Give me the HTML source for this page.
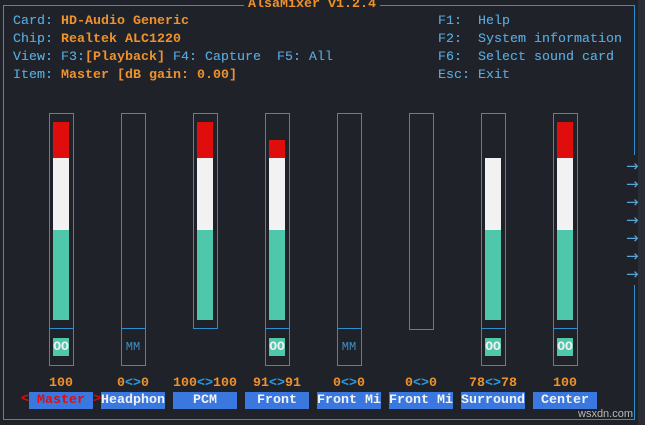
<!DOCTYPE html>
<html><head><style>
body{margin:0;width:645px;height:425px;background:#1f2229;overflow:hidden;position:relative;font-family:"Liberation Mono",monospace;font-size:13.33px;}
.t{position:absolute;white-space:pre;line-height:18px;}
.b{color:#55a6d9;font-weight:500;text-shadow:0 0 0.3px #55a6d9}
.o{color:#f0922b;font-weight:bold}
.box{position:absolute;border:1px solid #2b8fd0;box-sizing:border-box;width:25px;}
.f{position:absolute;width:16px;}
.lab{position:absolute;top:392px;height:17px;width:64px;background:#3a78df;color:#f2f2f2;font-weight:bold;line-height:17px;text-align:center;white-space:pre;}
.val{position:absolute;top:375px;width:72px;text-align:center;line-height:18px;font-weight:bold;color:#f0922b;}
.val span{color:#2b9ce0}
.oo{position:absolute;width:16px;height:18px;background:#4fc7ab;color:#f2f2f2;font-weight:bold;text-align:center;line-height:18px;font-size:13px}
.mm{position:absolute;width:16px;color:#3d8fc9;text-align:center;line-height:18px;font-size:12px}
.ar{position:absolute;left:626px;color:#55a6d9;font-size:15px;line-height:18px;font-family:"DejaVu Sans",sans-serif}
</style></head><body>
<div style="position:absolute;left:3px;top:5px;width:632px;height:415px;border:1px solid #2b8fd0;box-sizing:border-box"></div>
<div style="position:absolute;left:638px;top:0;width:7px;height:425px;background:#2a2d33"></div>
<div class="t o" style="left:244px;top:-4px;background:#1f2229;padding:0 4px">AlsaMixer v1.2.4</div>
<div class="t" style="left:13px;top:13px"><span class="b">Card: </span><span class="o">HD-Audio Generic</span></div>
<div class="t" style="left:13px;top:31px"><span class="b">Chip: </span><span class="o">Realtek ALC1220</span></div>
<div class="t" style="left:13px;top:49px"><span class="b">View: F3:</span><span class="o">[Playback]</span><span class="b"> F4: Capture  F5: All</span></div>
<div class="t" style="left:13px;top:67px"><span class="b">Item: </span><span class="o">Master [dB gain: 0.00]</span></div>
<div class="t b" style="left:438px;top:13px">F1:  Help</div>
<div class="t b" style="left:438px;top:31px">F2:  System information</div>
<div class="t b" style="left:438px;top:49px">F6:  Select sound card</div>
<div class="t b" style="left:438px;top:67px">Esc: Exit</div>

<div class="box" style="left:49px;top:113px;height:216px"></div><div class="box" style="left:49px;top:328px;height:38px"></div>
<div class="f" style="left:53px;top:122px;height:36px;background:#e00d0d"></div><div class="f" style="left:53px;top:158px;height:72px;background:#f2f2f2"></div><div class="f" style="left:53px;top:230px;height:90px;background:#4fc7ab"></div>
<div class="oo" style="left:53px;top:338px">OO</div>

<div class="box" style="left:121px;top:113px;height:216px"></div><div class="box" style="left:121px;top:328px;height:38px"></div>
<div class="mm" style="left:125px;top:338px">MM</div>

<div class="box" style="left:193px;top:113px;height:216px"></div>
<div class="f" style="left:197px;top:122px;height:36px;background:#e00d0d"></div><div class="f" style="left:197px;top:158px;height:72px;background:#f2f2f2"></div><div class="f" style="left:197px;top:230px;height:90px;background:#4fc7ab"></div>

<div class="box" style="left:265px;top:113px;height:216px"></div><div class="box" style="left:265px;top:328px;height:38px"></div>
<div class="f" style="left:269px;top:140px;height:18px;background:#e00d0d"></div><div class="f" style="left:269px;top:158px;height:72px;background:#f2f2f2"></div><div class="f" style="left:269px;top:230px;height:90px;background:#4fc7ab"></div>
<div class="oo" style="left:269px;top:338px">OO</div>

<div class="box" style="left:337px;top:113px;height:216px"></div><div class="box" style="left:337px;top:328px;height:38px"></div>
<div class="mm" style="left:341px;top:338px">MM</div>

<div class="box" style="left:409px;top:113px;height:217px"></div>

<div class="box" style="left:481px;top:113px;height:216px"></div><div class="box" style="left:481px;top:328px;height:38px"></div>
<div class="f" style="left:485px;top:158px;height:72px;background:#f2f2f2"></div><div class="f" style="left:485px;top:230px;height:90px;background:#4fc7ab"></div>
<div class="oo" style="left:485px;top:338px">OO</div>

<div class="box" style="left:553px;top:113px;height:216px"></div><div class="box" style="left:553px;top:328px;height:38px"></div>
<div class="f" style="left:557px;top:122px;height:36px;background:#e00d0d"></div><div class="f" style="left:557px;top:158px;height:72px;background:#f2f2f2"></div><div class="f" style="left:557px;top:230px;height:90px;background:#4fc7ab"></div>
<div class="oo" style="left:557px;top:338px">OO</div>

<div class="val" style="left:25px">100</div>
<div class="val" style="left:97px">0<span>&lt;&gt;</span>0</div>
<div class="val" style="left:169px">100<span>&lt;&gt;</span>100</div>
<div class="val" style="left:241px">91<span>&lt;&gt;</span>91</div>
<div class="val" style="left:313px">0<span>&lt;&gt;</span>0</div>
<div class="val" style="left:385px">0<span>&lt;&gt;</span>0</div>
<div class="val" style="left:457px">78<span>&lt;&gt;</span>78</div>
<div class="val" style="left:529px">100</div>

<div class="t" style="left:21px;top:391px;color:#e00d0d;font-weight:bold">&lt;</div>
<div class="t" style="left:93px;top:391px;color:#e00d0d;font-weight:bold">&gt;</div>
<div class="lab" style="left:29px;color:#e00d0d">Master</div>
<div class="lab" style="left:101px">Headphon</div>
<div class="lab" style="left:173px">PCM</div>
<div class="lab" style="left:245px">Front</div>
<div class="lab" style="left:317px">Front Mi</div>
<div class="lab" style="left:389px">Front Mi</div>
<div class="lab" style="left:461px">Surround</div>
<div class="lab" style="left:533px">Center</div>

<div style="position:absolute;left:625px;top:155px;width:11px;height:130px;background:#1f2229"></div>
<div class="ar" style="top:157px">→</div>
<div class="ar" style="top:175px">→</div>
<div class="ar" style="top:193px">→</div>
<div class="ar" style="top:211px">→</div>
<div class="ar" style="top:229px">→</div>
<div class="ar" style="top:247px">→</div>
<div class="ar" style="top:265px">→</div>
<div class="t" style="left:578px;top:405px;color:#b8b8b8;font-size:11px;font-family:'Liberation Sans',sans-serif">wsxdn.com</div>
</body></html>
